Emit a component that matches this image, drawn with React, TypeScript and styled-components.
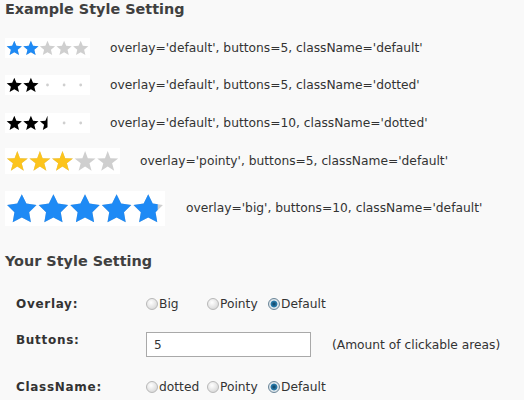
import React from "react";
import styled, { createGlobalStyle } from "styled-components";

const Global = createGlobalStyle`
  html, body { margin: 0; padding: 0; background: #f9f9f9; }
  body { font-family: "DejaVu Sans", Verdana, sans-serif; color: #333; }
`;

const Page = styled.div`
  padding: 0 5px;
  width: 514px;
`;

const Heading = styled.h2`
  margin: 0;
  font-size: 14.4px;
  font-weight: bold;
  color: #404040;
  line-height: 18px;
`;

const ExampleList = styled.div`
  display: flex;
  flex-direction: column;
  margin-top: 12px;
  margin-bottom: 16px;
`;

const ExampleRow = styled.div<{ $h: number; $gap: number }>`
  display: flex;
  align-items: center;
  height: ${(p) => p.$h}px;
  gap: ${(p) => p.$gap}px;
`;

const StarBox = styled.div`
  background: #ffffff;
  display: flex;
  align-items: center;
  padding: 2px 1px;
`;

const Caption = styled.span`
  font-size: 12.25px;
  color: #333;
`;

const Form = styled.div`
  display: grid;
  grid-template-columns: 130px auto;
  padding-left: 11px;
  margin-top: 14px;
`;

const Label = styled.div<{ $h: number; $pt: number }>`
  font-weight: bold;
  font-size: 12px;
  line-height: 14px;
  color: #333;
  height: ${(p) => p.$h}px;
  box-sizing: border-box;
  padding-top: ${(p) => p.$pt}px;
  letter-spacing: 0.7px;
`;

const Field = styled.div<{ $h: number; $pt: number }>`
  height: ${(p) => p.$h}px;
  box-sizing: border-box;
  padding-top: ${(p) => p.$pt}px;
  display: flex;
  align-items: flex-start;
  font-size: 12.25px;
`;

const RadioLabel = styled.label<{ $w?: number }>`
  display: inline-flex;
  align-items: center;
  height: 14px;
  line-height: 14px;
  width: ${(p) => (p.$w ? `${p.$w}px` : "auto")};
  color: #333;
  font-size: 12.25px;
`;

const RadioDot = styled.span<{ $checked?: boolean }>`
  width: 12px;
  height: 12px;
  border-radius: 50%;
  box-sizing: border-box;
  margin-right: 1px;
  border: 1px solid ${(p) => (p.$checked ? "#6a8598" : "#b8b8b8")};
  background: ${(p) =>
    p.$checked
      ? "radial-gradient(circle at 50% 50%, #103f5e 0, #2b7fb0 3px, #dde6ec 3.8px, #d6dbdf 100%)"
      : "radial-gradient(circle at 40% 35%, #ffffff 0, #e2e2e2 60%, #cdcdcd 100%)"};
`;

const InputRow = styled.div`
  display: flex;
  align-items: center;
`;

const TextInput = styled.input`
  box-sizing: border-box;
  width: 165px;
  height: 25px;
  border: 1px solid #a9a9a9;
  background: #fff;
  padding: 0 7px;
  font-family: "DejaVu Sans", Verdana, sans-serif;
  font-size: 12px;
  color: #333;
  outline: none;
`;

const Hint = styled.span`
  margin-left: 21px;
  font-size: 12.25px;
  color: #333;
`;

function starPath(cx: number, cy: number, R: number, ratio: number) {
  const pts: string[] = [];
  for (let i = 0; i < 10; i++) {
    const r = i % 2 === 0 ? R : R * ratio;
    const a = -Math.PI / 2 + (i * Math.PI) / 5;
    pts.push(`${(cx + r * Math.cos(a)).toFixed(2)},${(cy + r * Math.sin(a)).toFixed(2)}`);
  }
  return `M${pts.join("L")}Z`;
}

type StarsProps = {
  id: string;
  count: number;
  value: number;
  pitch: number;
  size: number;
  color: string;
  empty: string;
  dotted?: boolean;
  ratio?: number;
};

function Stars({ id, count, value, pitch, size, color, empty, dotted, ratio = 0.45 }: StarsProps) {
  const w = count * pitch;
  const h = size;
  return (
    <svg width={w} height={h} viewBox={`0 0 ${w} ${h}`}>
      <defs>
        {Array.from({ length: count }).map((_, i) => {
          const f = Math.max(0, Math.min(1, value - i));
          return (
            <clipPath id={`${id}-c${i}`} key={i}>
              <rect x={i * pitch} y={0} width={f * pitch} height={h} />
            </clipPath>
          );
        })}
      </defs>
      {Array.from({ length: count }).map((_, i) => {
        const cx = i * pitch + pitch / 2;
        const cy = h / 2 + size * 0.04;
        const R = size / 2;
        const d = starPath(cx, cy, R, ratio);
        const f = Math.max(0, Math.min(1, value - i));
        return (
          <g key={i}>
            {dotted ? (
              f === 0 ? <circle cx={cx} cy={h / 2} r={1.4} fill="#cfcfcf" /> : null
            ) : (
              <path d={d} fill={empty} />
            )}
            {f > 0 && <path d={d} fill={color} clipPath={`url(#${id}-c${i})`} />}
          </g>
        );
      })}
    </svg>
  );
}

export default function App() {
  return (
    <Page>
      <Global />
      <Heading>Example Style Setting</Heading>
      <ExampleList>
        <ExampleRow $h={36} $gap={20}>
          <StarBox>
            <Stars id="r1" count={5} value={2} pitch={16.6} size={16} color="#1e8af5" empty="#cfcfcf" />
          </StarBox>
          <Caption>overlay='default', buttons=5, className='default'</Caption>
        </ExampleRow>
        <ExampleRow $h={38} $gap={20}>
          <StarBox>
            <Stars id="r2" count={5} value={2} pitch={16.6} size={16} color="#000" empty="#cfcfcf" dotted />
          </StarBox>
          <Caption>overlay='default', buttons=5, className='dotted'</Caption>
        </ExampleRow>
        <ExampleRow $h={38} $gap={20}>
          <StarBox>
            <Stars id="r3" count={5} value={2.5} pitch={16.6} size={16} color="#000" empty="#cfcfcf" dotted />
          </StarBox>
          <Caption>overlay='default', buttons=10, className='dotted'</Caption>
        </ExampleRow>
        <ExampleRow $h={38} $gap={20}>
          <StarBox>
            <Stars id="r4" count={5} value={3} pitch={22.6} size={22} color="#fcc41d" empty="#cfcfcf" ratio={0.42} />
          </StarBox>
          <Caption>overlay='pointy', buttons=5, className='default'</Caption>
        </ExampleRow>
        <ExampleRow $h={56} $gap={21}>
          <StarBox>
            <Stars id="r5" count={5} value={4.8} pitch={31.6} size={31} color="#1e8af5" empty="#cfcfcf" ratio={0.5} />
          </StarBox>
          <Caption>overlay='big', buttons=10, className='default'</Caption>
        </ExampleRow>
      </ExampleList>
      <Heading>Your Style Setting</Heading>
      <Form>
        <Label $h={36} $pt={13}>Overlay:</Label>
        <Field $h={36} $pt={13}>
          <RadioLabel $w={61}><RadioDot />Big</RadioLabel>
          <RadioLabel $w={61}><RadioDot />Pointy</RadioLabel>
          <RadioLabel><RadioDot $checked />Default</RadioLabel>
        </Field>
        <Label $h={48} $pt={13}>Buttons:</Label>
        <Field $h={48} $pt={12}>
          <InputRow>
            <TextInput defaultValue="5" />
            <Hint>(Amount of clickable areas)</Hint>
          </InputRow>
        </Field>
        <Label $h={34} $pt={12}>ClassName:</Label>
        <Field $h={34} $pt={12}>
          <RadioLabel $w={61}><RadioDot />dotted</RadioLabel>
          <RadioLabel $w={61}><RadioDot />Pointy</RadioLabel>
          <RadioLabel><RadioDot $checked />Default</RadioLabel>
        </Field>
      </Form>
    </Page>
  );
}
